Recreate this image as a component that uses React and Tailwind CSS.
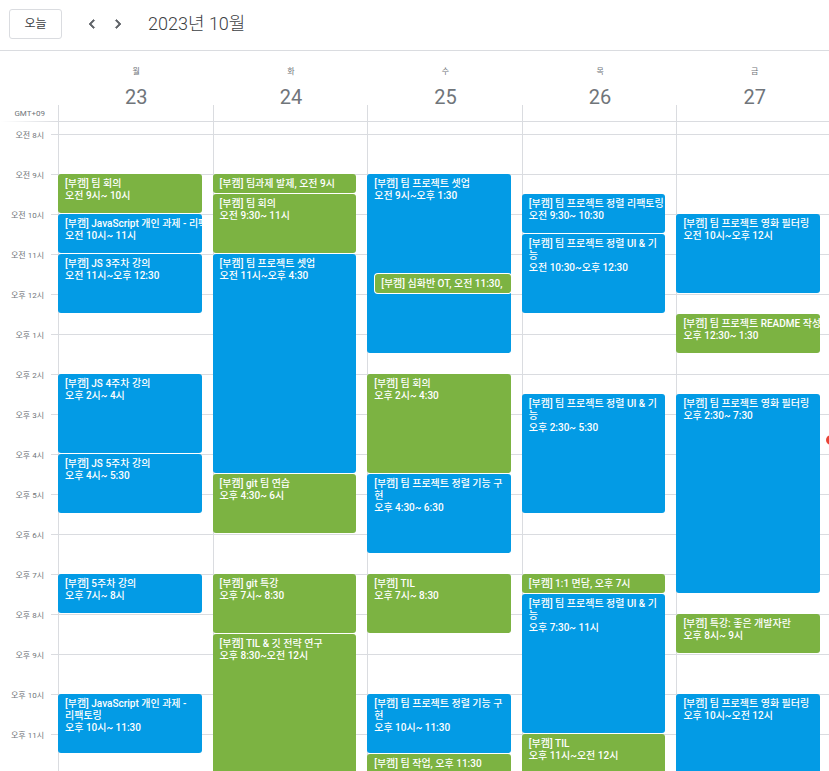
import React from "react";

const FIRST_HOUR = 8;
const HOURS = Array.from({ length: 17 }, (_, i) => FIRST_HOUR + i);

const days = [
  {
    name: "월",
    date: 23,
    events: [
      { title: "[부캠] 팀 회의", time: "오전 9시~ 10시", start: 9, end: 10, color: "green" },
      { title: "[부캠] JavaScript 개인 과제 - 리팩토링", time: "오전 10시~ 11시", start: 10, end: 11, color: "blue" },
      { title: "[부캠] JS 3주차 강의", time: "오전 11시~오후 12:30", start: 11, end: 12.5, color: "blue" },
      { title: "[부캠] JS 4주차 강의", time: "오후 2시~ 4시", start: 14, end: 16, color: "blue" },
      { title: "[부캠] JS 5주차 강의", time: "오후 4시~ 5:30", start: 16, end: 17.5, color: "blue" },
      { title: "[부캠] 5주차 강의", time: "오후 7시~ 8시", start: 19, end: 20, color: "blue" },
      { title: "[부캠] JavaScript 개인 과제 - 리팩토링", time: "오후 10시~ 11:30", start: 22, end: 23.5, color: "blue" },
    ],
  },
  {
    name: "화",
    date: 24,
    events: [
      { title: "[부캠] 팀과제 발제", time: "오전 9시", start: 9, end: 9.5, color: "green" },
      { title: "[부캠] 팀 회의", time: "오전 9:30~ 11시", start: 9.5, end: 11, color: "green" },
      { title: "[부캠] 팀 프로젝트 셋업", time: "오전 11시~오후 4:30", start: 11, end: 16.5, color: "blue" },
      { title: "[부캠] git 팀 연습", time: "오후 4:30~ 6시", start: 16.5, end: 18, color: "green" },
      { title: "[부캠] git 특강", time: "오후 7시~ 8:30", start: 19, end: 20.5, color: "green" },
      { title: "[부캠] TIL & 깃 전략 연구", time: "오후 8:30~오전 12시", start: 20.5, end: 24, color: "green" },
    ],
  },
  {
    name: "수",
    date: 25,
    events: [
      { title: "[부캠] 팀 프로젝트 셋업", time: "오전 9시~오후 1:30", start: 9, end: 13.5, color: "blue" },
      { title: "[부캠] 심화반 OT", time: "오전 11:30,", start: 11.5, end: 12, color: "green", nested: true },
      { title: "[부캠] 팀 회의", time: "오후 2시~ 4:30", start: 14, end: 16.5, color: "green" },
      { title: "[부캠] 팀 프로젝트 정렬 기능 구현", time: "오후 4:30~ 6:30", start: 16.5, end: 18.5, color: "blue" },
      { title: "[부캠] TIL", time: "오후 7시~ 8:30", start: 19, end: 20.5, color: "green" },
      { title: "[부캠] 팀 프로젝트 정렬 기능 구현", time: "오후 10시~ 11:30", start: 22, end: 23.5, color: "blue" },
      { title: "[부캠] 팀 작업", time: "오후 11:30", start: 23.5, end: 24, color: "green" },
    ],
  },
  {
    name: "목",
    date: 26,
    events: [
      { title: "[부캠] 팀 프로젝트 정렬 리팩토링", time: "오전 9:30~ 10:30", start: 9.5, end: 10.5, color: "blue" },
      { title: "[부캠] 팀 프로젝트 정렬 UI & 기능", time: "오전 10:30~오후 12:30", start: 10.5, end: 12.5, color: "blue" },
      { title: "[부캠] 팀 프로젝트 정렬 UI & 기능", time: "오후 2:30~ 5:30", start: 14.5, end: 17.5, color: "blue" },
      { title: "[부캠] 1:1 면담", time: "오후 7시", start: 19, end: 19.5, color: "green" },
      { title: "[부캠] 팀 프로젝트 정렬 UI & 기능", time: "오후 7:30~ 11시", start: 19.5, end: 23, color: "blue" },
      { title: "[부캠] TIL", time: "오후 11시~오전 12시", start: 23, end: 24, color: "green" },
    ],
  },
  {
    name: "금",
    date: 27,
    events: [
      { title: "[부캠] 팀 프로젝트 영화 필터링", time: "오전 10시~오후 12시", start: 10, end: 12, color: "blue" },
      { title: "[부캠] 팀 프로젝트 README 작성", time: "오후 12:30~ 1:30", start: 12.5, end: 13.5, color: "green" },
      { title: "[부캠] 팀 프로젝트 영화 필터링", time: "오후 2:30~ 7:30", start: 14.5, end: 19.5, color: "blue" },
      { title: "[부캠] 특강: 좋은 개발자란", time: "오후 8시~ 9시", start: 20, end: 21, color: "green" },
      { title: "[부캠] 팀 프로젝트 영화 필터링", time: "오후 10시~오전 12시", start: 22, end: 24, color: "blue" },
    ],
  },
];

const colors = { green: "bg-[#7cb342]", blue: "bg-[#039be5]" };

// Half-hour grid line number for a given time of day.
const rowOf = (hour) => (hour - FIRST_HOUR) * 2 + 1;

const hourLabel = (hour) => (hour < 12 ? `오전 ${hour}시` : `오후 ${hour === 12 ? 12 : hour - 12}시`);

function Event({ event }) {
  const length = event.end - event.start;
  const place = event.nested ? "ml-[7px] mr-[11px] pl-[6px] ring-1 ring-white" : "-ml-px mr-[11px] pl-[7px]";
  return (
    <button
      type="button"
      className={`col-start-1 mb-px flex min-w-0 flex-col items-stretch justify-start overflow-hidden rounded-[3px] pr-[6px] pt-1 text-left text-[10px] font-medium leading-[12px] text-white ${place} ${colors[event.color]}`}
      style={{ gridRow: `${rowOf(event.start)} / ${rowOf(event.end)}` }}
    >
      {length <= 0.5 ? (
        <span className="whitespace-nowrap">
          {event.title}, {event.time}
        </span>
      ) : (
        <>
          <span className={length <= 1 ? "whitespace-nowrap" : ""}>{event.title}</span>
          <span className="whitespace-nowrap">{event.time}</span>
        </>
      )}
    </button>
  );
}

function Chevron({ d }) {
  return (
    <svg viewBox="0 0 24 24" className="size-[18px]" fill="#5f6368" stroke="#5f6368" strokeWidth="1" aria-hidden="true">
      <path d={d} />
    </svg>
  );
}

export default function App() {
  return (
    <div className="flex h-screen flex-col overflow-hidden bg-white font-[Roboto,'Noto_Sans_CJK_KR',sans-serif] text-[#70757a]">
      <header className="flex h-[51px] shrink-0 items-center border-b border-[#dadce0] pb-[3px] pl-[9px]">
        <button type="button" className="h-[30px] w-[53px] rounded-[3px] border border-[#dadce0] text-[12px] text-[#3c4043]">
          오늘
        </button>
        <button type="button" aria-label="지난주" className="ml-[17px] flex size-[26px] items-center justify-center">
          <Chevron d="M15.41 7.41 14 6l-6 6 6 6 1.41-1.41L10.83 12z" />
        </button>
        <button type="button" aria-label="다음 주" className="flex size-[26px] items-center justify-center">
          <Chevron d="M10 6 8.59 7.41 13.17 12l-4.58 4.59L10 18l6-6z" />
        </button>
        <h1 className="ml-[17px] text-[18px] font-light leading-6 text-[#3c4043]">2023년 10월</h1>
      </header>

      <div className="flex h-[71px] shrink-0">
        <div className="flex w-[58px] shrink-0 flex-col">
          <div className="mt-auto pr-[13px] text-right text-[8px] leading-[14px]">GMT+09</div>
          <div className="h-px bg-linear-to-r from-transparent to-[#dadce0]" />
        </div>
        <div className="-mr-0.5 grid flex-1 grid-cols-5 border-b border-[#dadce0]">
          {days.map((day) => (
            <div key={day.date} className="flex flex-col items-center pt-3">
              <span className="pl-0.5 text-[8px] leading-[18px]">{day.name}</span>
              <span className="pl-0.5 pt-0.5 text-[20px] leading-[28px]">{day.date}</span>
              <div className="-mt-1.5 h-4 w-full border-l border-[#dadce0]" />
            </div>
          ))}
        </div>
      </div>

      <main className="flex min-h-0 flex-1 overflow-hidden">
        <div className="w-[51px] shrink-0 pr-[7px] pt-2 text-right text-[8px] leading-[12px]">
          {HOURS.slice(0, 16).map((hour) => (
            <div key={hour} className="h-10">
              {hourLabel(hour)}
            </div>
          ))}
        </div>
        <div className="w-[7px] shrink-0 pt-3">
          {HOURS.map((hour) => (
            <div key={hour} className="h-10 border-t border-[#dadce0]" />
          ))}
        </div>
        <div className="relative -mr-0.5 grid flex-1 grid-cols-5 self-start">
          {days.map((day) => (
            <section
              key={day.date}
              aria-label={`${day.date}일 ${day.name}요일`}
              className="grid auto-rows-[20px] grid-cols-[minmax(0,1fr)] border-l border-[#dadce0] pt-3"
            >
              {HOURS.map((hour) => (
                <div
                  key={hour}
                  className="col-start-1 border-t border-[#dadce0]"
                  style={{ gridRow: `${rowOf(hour)} / span 2` }}
                />
              ))}
              {day.events.map((event) => (
                <Event key={event.start} event={event} />
              ))}
            </section>
          ))}
          <div className="absolute -right-[5px] top-[313px] size-[10px] rounded-full bg-[#ea4335]" />
        </div>
      </main>
    </div>
  );
}
